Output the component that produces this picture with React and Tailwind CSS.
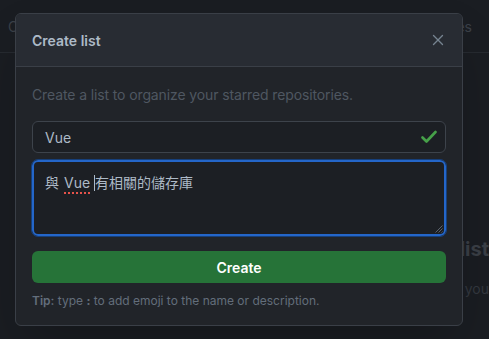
import React from 'react';
import { X } from 'lucide-react';

const App = () => {
  return (
    <div className="relative w-[489px] h-[339px] overflow-hidden bg-[#1a1d22] font-['Inter',sans-serif]">
      {/* Page behind the dialog */}
      <div className="flex flex-col">
        <div className="flex items-center justify-between h-[53px] pl-[8px] pr-[17px] border-b border-[#262a30] text-[14px] text-[#3b4048]">
          <span>C</span>
          <span>es</span>
        </div>
        <div className="mt-[181px] flex flex-col items-end whitespace-nowrap">
          <h2 className="text-[20px] font-bold text-[#3a3f46]">list</h2>
          <p className="mt-[14px] text-[14px] text-[#33383f]">t you</p>
        </div>
      </div>

      {/* Dialog */}
      <div className="absolute left-[15px] top-[13px] w-[448px] rounded-[6px] border border-[#3a3f47] bg-[#212429] overflow-hidden shadow-2xl">
        <div className="flex items-center justify-between h-[53px] px-[16px] bg-[#282c33] border-b border-[#3a3f47]">
          <h1 className="text-[14px] font-semibold text-[#adbac7]">Create list</h1>
          <X className="w-[18px] h-[18px] text-[#768390] mr-[-1px]" strokeWidth={1.8} />
        </div>
        <div className="px-[16px] pt-[17px] pb-[16px]">
          <p className="text-[14px] tracking-[-0.12px] text-[#4f5761]">Create a list to organize your starred repositories.</p>
          <div className="mt-[16px] flex items-center justify-between h-[32px] pl-[12px] pr-[8px] rounded-[6px] border border-[#3d434b] bg-[#1c1f24]">
            <span className="text-[14px] text-[#adbac7]">Vue</span>
            <svg width="16" height="14" viewBox="0 0 16 14">
              <path d="M1.5 7.5L5.5 11.5L14.5 2" fill="none" stroke="#46a049" strokeWidth="2.6" strokeLinecap="round" strokeLinejoin="round" />
            </svg>
          </div>
          <div className="relative mt-[7px] h-[76px] rounded-[6px] border-2 border-[#2466c9] outline outline-1 outline-[#163f7a] bg-[#1c1f24] px-[11px] pt-[10px]">
            <div className="text-[14px] text-[#adbac7] font-['Inter','Noto_Sans_CJK_TC',sans-serif] flex items-center">
              <span>與</span>
              <span className="ml-[5px] underline decoration-dotted decoration-[#e5534b] decoration-2 underline-offset-[4px]">Vue</span>
              <span className="ml-[4px] inline-block w-[1px] h-[16px] bg-[#adbac7]"></span>
              <span>有相關的儲存庫</span>
            </div>
            <svg className="absolute right-[1px] bottom-[1px]" width="9" height="9" viewBox="0 0 9 9">
              <path d="M8.5 1.5L1.5 8.5M8.5 4.5L4.5 8.5M8.5 7.5L7.5 8.5" stroke="#5c636d" strokeWidth="1" />
            </svg>
          </div>
          <button className="mt-[15px] w-full h-[32px] rounded-[6px] bg-[#267338] text-white text-[14px] font-semibold">
            Create
          </button>
          <p className="mt-[10px] text-[12px] leading-[16px] text-[#636e7b]">
            <span className="font-semibold">Tip:</span> type <span className="font-bold">:</span> to add emoji to the name or description.
          </p>
        </div>
      </div>
    </div>
  );
};

export default App;
